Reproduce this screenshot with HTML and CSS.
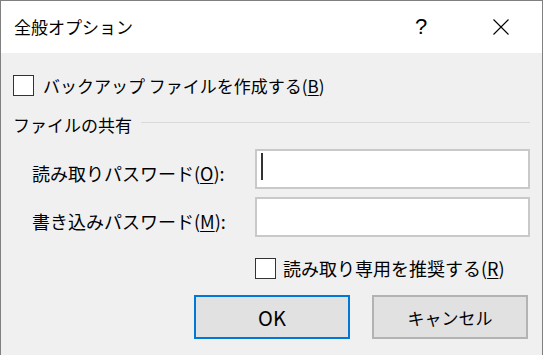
FILE: index.html
```html
<!DOCTYPE html>
<html lang="ja">
<head>
  <meta charset="UTF-8" />
  <title>全般オプション</title>
  <link rel="stylesheet" href="styles.css">
</head>
<body>
  <div class="dialog">
    <div class="titlebar">
      <span class="title">全般オプション</span>
      <span class="help">?</span>
      <span class="close">
        <svg width="16" height="16" viewBox="0 0 16 16">
          <path d="M0.5 0.5 L15.5 15.5 M15.5 0.5 L0.5 15.5" stroke="#000" stroke-width="1.1" fill="none" />
        </svg>
      </span>
    </div>

    <div class="content">
      <div class="check check-backup">
        <span class="box"></span>
        <span class="check-text">バックアップ ファイルを作成する(<u>B</u>)</span>
      </div>

      <div class="group-head">
        <span>ファイルの共有</span>
        <span class="rule"></span>
      </div>

      <div class="pw-grid">
        <span class="pw-label">読み取りパスワード(<u>O</u>):</span>
        <div class="field"><span class="caret"></span></div>
        <span class="pw-label">書き込みパスワード(<u>M</u>):</span>
        <div class="field"></div>
      </div>

      <div class="check check-readonly">
        <span class="box"></span>
        <span class="check-text">読み取り専用を推奨する(<u>R</u>)</span>
      </div>

      <div class="buttons">
        <button class="btn btn-default">OK</button>
        <button class="btn">キャンセル</button>
      </div>
    </div>
  </div>
</body>
</html>
```

FILE: styles.css
```css
html, body {
  margin: 0;
  padding: 0;
  width: 543px;
  height: 355px;
  overflow: hidden;
}
body {
  font-family: "Noto Sans CJK JP", "Noto Sans", sans-serif;
  color: #000;
  background: #f0f0f0;
}
.dialog {
  height: 355px;
  box-sizing: border-box;
  border: 1px solid #808080;
  border-bottom: none;
  display: flex;
  flex-direction: column;
}
.titlebar {
  height: 52px;
  background: #fff;
  display: flex;
  align-items: center;
  padding-left: 13px;
}
.title {
  flex: 1;
  font-size: 17px;
  line-height: 24px;
}
.help {
  width: 30px;
  text-align: center;
  font-family: "Liberation Sans", sans-serif;
  font-size: 22px;
  color: #000;
  margin-right: 57px;
}
.close {
  width: 16px;
  height: 16px;
  display: flex;
  margin-right: 33px;
}
.content {
  flex: 1;
  background: #f0f0f0;
  padding: 0 12px;
  font-size: 17px;
}

/* checkboxes */
.check {
  display: flex;
  align-items: center;
  height: 21px;
}
.check-backup {
  margin-top: 22px;
  gap: 9px;
}
.check-readonly {
  margin-top: 21px;
  padding-left: 242px;
  gap: 7px;
  font-size: 18px;
}
.box {
  width: 21px;
  height: 21px;
  box-sizing: border-box;
  border: 1px solid #333;
  background: #fff;
}
.check-text {
  line-height: 21px;
  white-space: nowrap;
}
u {
  text-underline-offset: 2px;
}

/* group header */
.group-head {
  margin-top: 17px;
  height: 24px;
  display: flex;
  align-items: center;
  gap: 9px;
  line-height: 24px;
}
.rule {
  flex: 1;
  height: 1px;
  background: #dadada;
  margin-top: -5px;
}

/* password fields */
.pw-grid {
  margin-top: 12px;
  display: grid;
  grid-template-columns: 242px 1fr;
  row-gap: 8px;
}
.pw-label {
  padding-left: 19px;
  padding-top: 8px;
  align-self: center;
  font-size: 18px;
  line-height: 24px;
  white-space: nowrap;
}
.field {
  height: 40px;
  box-sizing: border-box;
  background: #fff;
  border: 2px solid #c9c9c9;
}
.caret {
  display: block;
  width: 2px;
  height: 27px;
  margin: 2px 0 0 4px;
  background: #333;
}

/* buttons */
.buttons {
  margin-top: 16px;
  display: flex;
  justify-content: flex-end;
  gap: 22px;
  padding-right: 2px;
}
.btn {
  width: 156px;
  height: 44px;
  box-sizing: border-box;
  background: #e1e1e1;
  border: 2px solid #b3b3b3;
  font-family: "Noto Sans CJK JP", "Noto Sans", sans-serif;
  font-size: 17px;
  color: #000;
  padding: 0;
}
.btn-default {
  border-color: #0078d7;
  font-size: 20px;
}
```
